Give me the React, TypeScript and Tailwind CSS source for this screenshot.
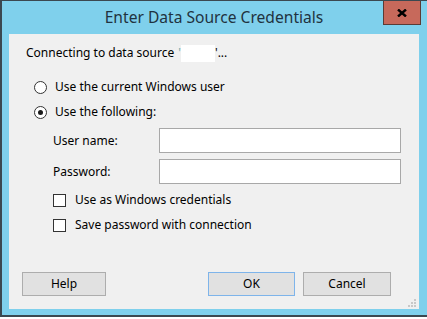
const font = { fontFamily: '"Segoe UI", "Noto Sans", "Open Sans", sans-serif' };

function Radio({ checked }: { checked?: boolean }) {
  return (
    <span className="flex h-[13px] w-[13px] items-center justify-center rounded-full border border-[#333] bg-white">
      {checked ? <span className="h-[5px] w-[5px] rounded-full bg-[#1a1a1a]" /> : null}
    </span>
  );
}

function Checkbox() {
  return <span className="block h-[13px] w-[13px] border border-[#333] bg-white" />;
}

function Button({ label, primary, width }: { label: string; primary?: boolean; width: string }) {
  return (
    <button
      className={
        "flex h-[24px] items-center justify-center border bg-[#e1e1e1] text-[12px] text-black " +
        width +
        (primary ? " border-[#7eb4ea]" : " border-[#adadad]")
      }
    >
      {label}
    </button>
  );
}

export default function App() {
  return (
    <div className="h-[319px] w-[427px] overflow-hidden bg-white" style={font}>
      <div className="flex h-[317px] w-[427px] flex-col border-t border-b-2 border-l-2 border-[#3b4850] bg-[#7fd0ec] pr-[8px] pb-[6px] pl-[7px]">
        {/* title bar */}
        <div className="relative flex h-[33px] items-center justify-center">
          <span className="text-[15.6px] text-[#1f3340]">Enter Data Source Credentials</span>
          <div className="absolute top-0 right-[-2px] flex h-[24px] w-[38px] items-center justify-center border border-t-0 border-[#5b3b35] bg-[#c7695b]">
            <svg viewBox="0 0 10 8" className="h-[8px] w-[10px]">
              <path d="M1 0.5 L9 7.5 M9 0.5 L1 7.5" stroke="#000" strokeWidth="2.4" />
            </svg>
          </div>
        </div>

        {/* client area */}
        <div className="relative flex flex-1 flex-col bg-[#f0f0f0] text-[12px] text-black">
          <div className="mt-[11px] flex h-[16px] items-center pl-[17px]">
            <span>Connecting to data source </span>
            <span className="ml-[4px] text-[#7aa]">'</span>
            <span className="inline-block h-[17px] w-[34px] bg-white" />
            <span>'...</span>
          </div>

          <div className="mt-[16px] flex h-[20px] items-center gap-[8px] pl-[25px]">
            <Radio />
            <span>Use the current Windows user</span>
          </div>
          <div className="mt-[5px] flex h-[20px] items-center gap-[8px] pl-[25px]">
            <Radio checked />
            <span>Use the following:</span>
          </div>

          <div className="mt-[6px] flex h-[25px] items-center pl-[44px]">
            <span className="w-[106px]">User name:</span>
            <div className="h-[25px] w-[242px] border border-[#a8a8a8] bg-white" />
          </div>
          <div className="mt-[6px] flex h-[25px] items-center pl-[44px]">
            <span className="w-[106px]">Password:</span>
            <div className="h-[25px] w-[242px] border border-[#a8a8a8] bg-white" />
          </div>

          <div className="mt-[6px] flex h-[20px] items-center gap-[9px] pl-[44px]">
            <Checkbox />
            <span>Use as Windows credentials</span>
          </div>
          <div className="mt-[5px] flex h-[20px] items-center gap-[9px] pl-[44px]">
            <Checkbox />
            <span>Save password with connection</span>
          </div>

          <div className="mt-auto mb-[13px] flex items-center pr-[28px] pl-[13px]">
            <Button label="Help" width="w-[84px]" />
            <div className="flex-1" />
            <Button label="OK" primary width="w-[87px]" />
            <div className="w-[8px]" />
            <Button label="Cancel" width="w-[88px]" />
          </div>

          <svg viewBox="0 0 8 8" className="absolute right-[3px] bottom-[2px] h-[8px] w-[8px]">
            <rect x="6" y="0" width="2" height="2" fill="#c8c8c8" />
            <rect x="3" y="3" width="2" height="2" fill="#c8c8c8" />
            <rect x="6" y="3" width="2" height="2" fill="#c8c8c8" />
            <rect x="0" y="6" width="2" height="2" fill="#c8c8c8" />
            <rect x="3" y="6" width="2" height="2" fill="#c8c8c8" />
            <rect x="6" y="6" width="2" height="2" fill="#c8c8c8" />
          </svg>
        </div>
      </div>
    </div>
  );
}
